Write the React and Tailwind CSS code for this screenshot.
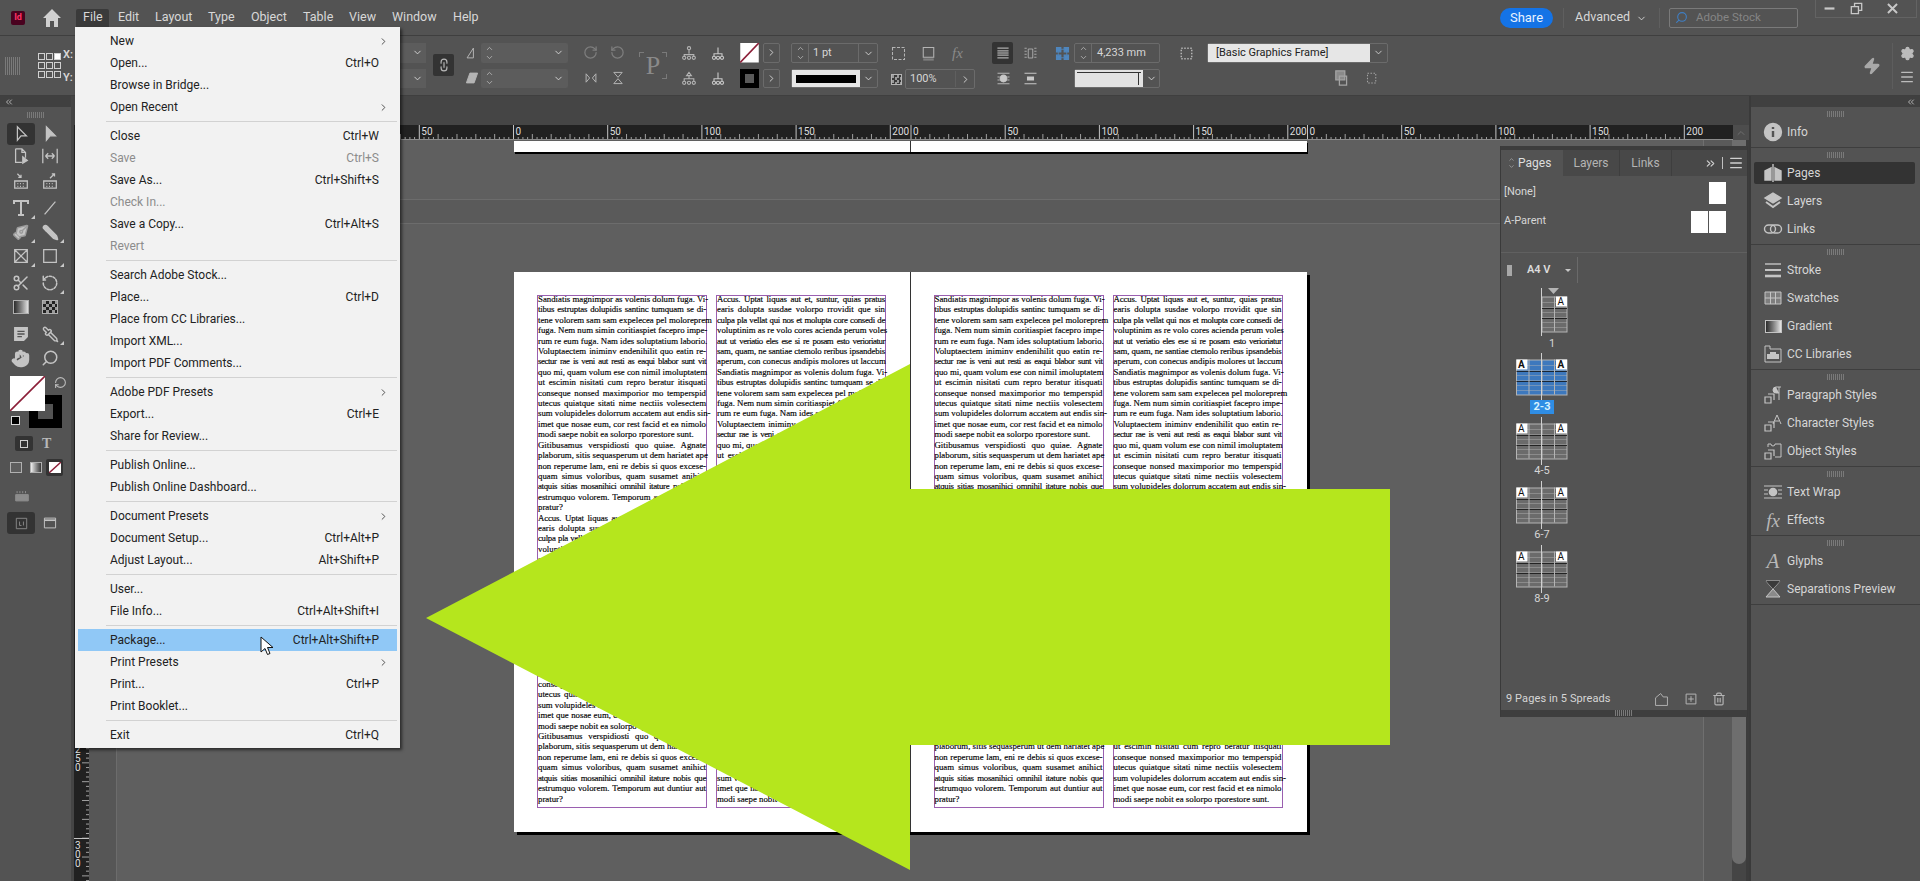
import { ChevronDown, ChevronRight, ChevronUp, ChevronsLeft, ChevronsRight, Hand, Link2, Menu, Pencil, PenTool, Pipette, RotateCcw, RotateCw, Scissors, Search, Settings, Trash2, Zap } from 'lucide-react'

const menuBar = [
  ['File', 'w-[35px]'],
  ['Edit', 'w-[37px]'],
  ['Layout', 'w-[53px]'],
  ['Type', 'w-[43px]'],
  ['Object', 'w-[52px]'],
  ['Table', 'w-[46px]'],
  ['View', 'w-[43px]'],
  ['Window', 'w-[61px]'],
  ['Help', 'w-[40px]'],
]

const fileMenu = [
  [{ label: 'New', sub: true }, { label: 'Open...', key: 'Ctrl+O' }, { label: 'Browse in Bridge...' }, { label: 'Open Recent', sub: true }],
  [{ label: 'Close', key: 'Ctrl+W' }, { label: 'Save', key: 'Ctrl+S', off: true }, { label: 'Save As...', key: 'Ctrl+Shift+S' }, { label: 'Check In...', off: true }, { label: 'Save a Copy...', key: 'Ctrl+Alt+S' }, { label: 'Revert', off: true }],
  [{ label: 'Search Adobe Stock...' }, { label: 'Place...', key: 'Ctrl+D' }, { label: 'Place from CC Libraries...' }, { label: 'Import XML...' }, { label: 'Import PDF Comments...' }],
  [{ label: 'Adobe PDF Presets', sub: true }, { label: 'Export...', key: 'Ctrl+E' }, { label: 'Share for Review...' }],
  [{ label: 'Publish Online...' }, { label: 'Publish Online Dashboard...' }],
  [{ label: 'Document Presets', sub: true }, { label: 'Document Setup...', key: 'Ctrl+Alt+P' }, { label: 'Adjust Layout...', key: 'Alt+Shift+P' }],
  [{ label: 'User...' }, { label: 'File Info...', key: 'Ctrl+Alt+Shift+I' }],
  [{ label: 'Package...', key: 'Ctrl+Alt+Shift+P', active: true }, { label: 'Print Presets', sub: true }, { label: 'Print...', key: 'Ctrl+P' }, { label: 'Print Booklet...' }],
  [{ label: 'Exit', key: 'Ctrl+Q' }],
]

const paraA = [
  'Sandiatis magnimpor as volenis dolum fuga. Vi-',
  'tibus estruptas dolupidis santinc tumquam se di-',
  'tene volorem sam sam expelecea pel moloreprem',
  'fuga. Nem num simin coritiaspiet facepro impe-',
  'rum re eum fuga. Nam ides soluptatium laborio.',
  'Voluptaectem iniminv endenihilit quo eatin re-',
  'sectur rae is veni aut resti as eaqui blabor sunt vit',
  'quo mi, quam volum ese con nimil imoluptatem',
  'ut escimin nisitati cum repro beratur itisquati',
  'conseque nonsed maximporior mo temperspid',
  'utecus quiatque sitati nime nectiis volesectem',
  'sum volupideles dolorrum accatem aut endis sin-',
  'imet que nosae eum, cor rest facid et ea nimolo',
  '~modi saepe nobit ea solorpo rporestore sunt.',
]
const paraB = [
  'Gitibusamus verspidiosti quo quiae. Agnate',
  'plaborum, sitis sequasperum ut dem hariatet ape',
  'non reperume lam, eni re debis si quos excese-',
  'quam simus voloribus, quam susamet anihict',
  'atquis sitias mosanihici omnihil itature nobis que',
  'estrumquo volorem. Temporum aut duntiur aut',
  '~pratur?',
]
const paraC = [
  'Accus. Uptat liquas aut et, suntur, quias pratus',
  'earis dolupta susdae volorpo rrovidit que sin',
  'culpa pla vellat qui nos et molupta core consedi de',
  'voluptinim as re volo cores acienda perum voles',
  'aut ut veriatio eles ese si re posam esto verioriatur',
  'sam, quam, ne santiae ctemolo reribus ipsandebis',
  'aperum, con conecus andipis molores ut laccum',
]
const columnOne = [...paraA, ...paraB, ...paraC, ...paraA, ...paraB]
const columnTwo = [...paraC, ...paraA, ...paraB, ...paraC, ...paraA]

const rulerOrigins = [
  { x: 513.5, from: 0, to: 200 },
  { x: 911, from: 0, to: 200 },
  { x: 1307.5, from: 0, to: 200 },
]

const Svg = ({ children, size = 18, box = 20, className = '' }) => (
  <svg width={size} height={size} viewBox={`0 0 ${box} ${box}`} fill="none" stroke="currentColor" strokeWidth="1.4" className={className}>
    {children}
  </svg>
)

const Corner = () => <span className="absolute bottom-0 right-0 h-0 w-0 border-b-[4px] border-l-[4px] border-b-[#c8c8c8] border-l-transparent" />

const Gripper = ({ className = '' }) => (
  <div className={`h-[6px] w-[18px] bg-[repeating-linear-gradient(90deg,#7a7a7a_0,#7a7a7a_1px,transparent_1px,transparent_2px)] ${className}`} />
)

const Tool = ({ children, corner, active }) => (
  <div className={`relative flex h-[22px] w-[28px] items-center justify-center rounded-[3px] text-[#c4c4c4] ${active ? 'bg-[#333333]' : ''}`}>
    {children}
    {corner && <Corner />}
  </div>
)

const tools = [
  {
    mt: 'mt-0',
    a: <Tool active><Svg><path d="M6 2v15l4-5h6z" /></Svg></Tool>,
    b: <Tool><Svg><path d="M6 2v15l4-5h6z" fill="currentColor" /></Svg></Tool>,
  },
  {
    mt: 'mt-0',
    a: <Tool><Svg><path d="M4 2h7l4 4v6M4 2v15h7M11 2v4h4" /><path d="M12 11v7l5-3z" fill="currentColor" /></Svg></Tool>,
    b: <Tool><Svg><path d="M2 2v16M18 2v16M5 10h10M5 10l3-3M5 10l3 3M15 10l-3-3M15 10l-3 3" /></Svg></Tool>,
  },
  {
    mt: 'mt-[3px]',
    a: <Tool><Svg><path d="M3 10h14v8H3zM6 2l4 4M10 3v3H7" /><path d="M6 13h1M9 13h1M12 13h1M6 16h1M9 16h1M12 16h1" /></Svg></Tool>,
    b: <Tool><Svg><path d="M3 10h14v8H3zM10 7l5-5M12 2h3v3" /><path d="M6 13h1M9 13h1M12 13h1M6 16h1M9 16h1M12 16h1" /></Svg></Tool>,
  },
  {
    mt: 'mt-[5px]',
    a: <Tool corner><Svg size={20}><path d="M3 6V3h14v3M10 3v14M7 17h6" strokeWidth="2" /></Svg></Tool>,
    b: <Tool><Svg><path d="M4 17L16 3" /></Svg></Tool>,
  },
  {
    mt: 'mt-[2px]',
    a: <Tool corner><PenTool size={17} fill="currentColor" stroke="#9a9a9a" className="-scale-x-100" /></Tool>,
    b: <Tool corner><Pencil size={17} fill="currentColor" className="-scale-x-100" /></Tool>,
  },
  {
    mt: 'mt-[2px]',
    a: <Tool corner><Svg><path d="M3 3h14v14H3zM3 3l14 14M17 3L3 17" /></Svg></Tool>,
    b: <Tool corner><Svg><path d="M3 3h14v14H3z" /></Svg></Tool>,
  },
  {
    mt: 'mt-[5px]',
    a: <Tool><Scissors size={18} /></Tool>,
    b: <Tool corner><RotateCcw size={18} strokeDasharray="3 2" /></Tool>,
  },
  {
    mt: 'mt-[2px]',
    a: <Tool><span className="h-[14px] w-[16px] border border-[#b0b0b0] bg-gradient-to-r from-[#2c2c2c] to-[#e0e0e0]" /></Tool>,
    b: <Tool><span className="h-[14px] w-[16px] border border-[#b0b0b0] bg-[repeating-conic-gradient(#222222_0%_25%,#9a9a9a_0%_50%)] bg-[length:6px_6px]" /></Tool>,
  },
  {
    mt: 'mt-[5px]',
    a: <Tool><Svg><path d="M3 3h14v10l-4 4H3z" fill="currentColor" /><path d="M6 7h8M6 10h8M6 13h5" stroke="#535353" /></Svg></Tool>,
    b: <Tool corner><Pipette size={17} className="-scale-x-100" /></Tool>,
  },
  {
    mt: 'mt-[2px]',
    a: <Tool><Hand size={19} fill="currentColor" /></Tool>,
    b: <Tool><Search size={18} className="-scale-x-100" /></Tool>,
  },
]

const Dock = ({ children, icon, active }) => (
  <div className={`ml-[3px] mr-[5px] flex h-[22px] items-center rounded-[2px] text-[12px] text-[#d6d6d6] ${active ? 'bg-[#333333]' : ''}`}>
    <div className="flex w-[33px] items-center justify-center pl-[5px] text-[#c4c4c4]">{icon}</div>
    {children}
  </div>
)

const styleBoxes = <path d="M2 12h6v6H2zM5 9h6v6" strokeWidth="1.2" />

const dockGroups = [
  { items: [{ label: 'Info', icon: <Svg size={20}><circle cx="10" cy="10" r="8.5" fill="currentColor" /><path d="M10 5v2M10 9v6" stroke="#535353" strokeWidth="2.4" /></Svg> }] },
  {
    items: [
      { label: 'Pages', active: true, icon: <Svg size={20}><path d="M2 8l6-3v12H2zM18 8l-6-3v12h6z" fill="currentColor" /><path d="M10 1v18" /></Svg> },
      { label: 'Layers', icon: <Svg size={20}><path d="M10 2l8 5-8 5-8-5z" fill="currentColor" /><path d="M3 11l7 5 7-5" strokeWidth="2" /></Svg> },
      { label: 'Links', icon: <Svg size={20}><rect x="1.5" y="6" width="11" height="8" rx="4" /><rect x="7.5" y="6" width="11" height="8" rx="4" /></Svg> },
    ],
  },
  {
    items: [
      { label: 'Stroke', icon: <Svg size={20}><path d="M2 4h16" /><path d="M2 10h16" strokeWidth="2" /><path d="M2 16h16" strokeWidth="2.6" /></Svg> },
      { label: 'Swatches', icon: <Svg size={20}><path d="M2 4h16v12H2zM2 10h16M7.5 4v12M12.5 4v12" fill="#7e7e7e" strokeWidth="1" /></Svg> },
      { label: 'Gradient', icon: <span className="h-[13px] w-[17px] border border-[#c4c4c4] bg-gradient-to-r from-[#2c2c2c] to-[#e6e6e6]" /> },
      { label: 'CC Libraries', icon: <Svg size={20}><path d="M2 2v16h16V5H7V2z" strokeWidth="1" /><path d="M4 15v-5h3V8h6v2h3v5z" fill="currentColor" stroke="none" /></Svg> },
    ],
  },
  {
    items: [
      { label: 'Paragraph Styles', icon: <Svg size={20}>{styleBoxes}<path d="M16 2v13M13 2h5M13 2a3 3 0 0 0 0 6h3" fill="currentColor" strokeWidth="1" /></Svg> },
      { label: 'Character Styles', icon: <Svg size={20}>{styleBoxes}<path d="M10 11l4-9 4 9M12 8h4" strokeWidth="1" /></Svg> },
      { label: 'Object Styles', icon: <Svg size={20}>{styleBoxes}<path d="M5 6V3h3a2 2 0 0 0 4 0h6v13h-6" strokeWidth="1" /></Svg> },
    ],
  },
  {
    items: [
      { label: 'Text Wrap', icon: <Svg size={20}><path d="M1 4h18M1 16h18M1 8h4M1 12h4M15 8h4M15 12h4" strokeWidth="1" /><circle cx="10" cy="10" r="3.6" fill="currentColor" /></Svg> },
      { label: 'Effects', icon: <span className="font-['Liberation_Serif',serif] text-[19px] italic leading-none text-[#b8b8b8]">fx</span> },
    ],
  },
  {
    items: [
      { label: 'Glyphs', icon: <span className="font-['Liberation_Serif',serif] text-[21px] italic leading-none text-[#b8b8b8]">A</span> },
      { label: 'Separations Preview', icon: <Svg size={20}><path d="M3 2h14L3 18h14z" fill="#8a8a8a" strokeWidth="1" /><path d="M3 2h14L10 10z" fill="#3a3a3a" stroke="none" /></Svg> },
    ],
  },
]

const Field = ({ className = '', children }) => (
  <div className={`flex h-[20px] items-center rounded-[2px] border border-[#6b6b6b] text-[11px] text-[#d6d6d6] ${className}`}>{children}</div>
)

const Stepper = ({ className = '' }) => (
  <div className={`flex w-[17px] shrink-0 flex-col items-center text-[#c0c0c0] ${className}`}>
    <ChevronUp size={9} />
    <ChevronDown size={9} />
  </div>
)

const Ctl = ({ children, className = '' }) => (
  <div className={`flex h-[20px] items-center justify-center text-[#b4b4b4] ${className}`}>{children}</div>
)

// long lines get squeezed a little, the way the layout engine in the picture does it
const squeeze = (line) => {
  if (line.length >= 52) return 'tracking-[-0.42px]'
  if (line.length >= 50) return 'tracking-[-0.3px]'
  if (line.length >= 48) return 'tracking-[-0.15px]'
  return ''
}

const Column = ({ lines }) => (
  <div className="h-[513px] border border-[#9a5fb0] font-['Liberation_Serif',serif] text-[8.8px] leading-[10.41px] text-black [-webkit-text-stroke:0.15px_#000000]">
    <div className="-mt-[2px]">
      {lines.map((line, i) => (
        <div key={i} className={`h-[10.41px] whitespace-nowrap text-justify ${squeeze(line)} ${line.startsWith('~') ? '' : '[text-align-last:justify]'}`}>
          {line.replace('~', '')}
        </div>
      ))}
    </div>
  </div>
)

const Page = ({ className = '' }) => (
  <div className={`grid h-full w-[397px] grid-cols-[170px_170px] gap-x-[9px] pl-[23px] pt-[23px] ${className}`}>
    <Column lines={columnOne} />
    <Column lines={columnTwo} />
  </div>
)

const Ruler = () => {
  const marks = []
  rulerOrigins.forEach(({ x, from, to }, o) => {
    for (let mm = o === 0 ? -100 : from; mm <= to; mm += 2.5) {
      marks.push({ px: x + mm * 1.884 - 89, mm, major: mm % 50 === 0, mid: mm % 10 === 0 })
    }
  })
  return (
    <div className="relative h-[15px] flex-1 overflow-hidden bg-[#212121]">
      <svg width="1642" height="15" className="absolute left-0 top-0">
        {marks.map((m, i) => (
          <line key={i} x1={m.px} x2={m.px} y1={m.major ? 0 : m.mid ? 9 : 12} y2="15" stroke={m.major ? '#c4c4c4' : '#a0a0a0'} strokeWidth="1" />
        ))}
      </svg>
      {marks.filter((m) => m.major).map((m, i) => (
        <span key={i} className="absolute top-0 text-[10px] leading-[13px] text-[#dddddd]" style={{ left: m.px + 2 }}>
          {Math.abs(m.mm)}
        </span>
      ))}
      <div className="absolute bottom-0 left-0 h-px w-full bg-[#8c8c8c]" />
    </div>
  )
}

const VerticalRuler = () => {
  const ticks = []
  for (let y = 604; y < 741; y += 4.71) ticks.push(y)
  return (
    <div className="relative w-[15px] shrink-0 bg-[#212121]">
      <svg width="15" height="741" className="absolute left-0 top-0">
        {ticks.map((y, i) => <line key={i} x1={i % 4 === 0 ? 8 : 12} x2="15" y1={y} y2={y} stroke="#a0a0a0" />)}
        <line x1="0" x2="15" y1="698.5" y2="698.5" stroke="#c4c4c4" />
      </svg>
      <div className="absolute left-[1px] top-[605px] flex flex-col text-[10px] leading-[9px] text-[#dddddd]">
        {['2', '5', '0'].map((d, i) => <span key={i}>{d}</span>)}
      </div>
      <div className="absolute left-[1px] top-[701px] flex flex-col text-[10px] leading-[9px] text-[#dddddd]">
        {['3', '0', '0'].map((d, i) => <span key={i}>{d}</span>)}
      </div>
    </div>
  )
}

const PageBox = ({ x, fill, border = '#b4b4b4' }) => (
  <g>
    <rect x={x} y="0.5" width="25" height="35" fill={fill} stroke={border} />
    {[6, 11, 16, 21, 26, 31].map((y) => <line key={y} x1={x} x2={x + 25} y1={y} y2={y} stroke={border} strokeOpacity="0.45" />)}
    <line x1={x} x2={x + 25} y1="12" y2="12" stroke="#111111" strokeOpacity="0.8" />
    <line x1={x} x2={x + 25} y1="22" y2="22" stroke="#111111" strokeOpacity="0.8" />
    <line x1={x + 12.5} x2={x + 12.5} y1="0" y2="35" stroke={border} />
  </g>
)

const Badge = ({ x, bold }) => (
  <g>
    <rect x={x} y="0" width="11" height="10" fill="#ffffff" />
    <text x={x + 1.5} y="8.5" fontSize="10" fontWeight={bold ? 700 : 400} fill="#111111">A</text>
  </g>
)

const Thumb = ({ label, active }) => (
  <div className="relative h-[64px] w-[52px]">
    <svg width="52" height="48" className="absolute left-0 top-0 overflow-visible">
      <g transform="translate(0.5 6.5)">
        <PageBox x={0} fill={active ? '#3d78bd' : '#6b6b6b'} />
        <PageBox x={25.5} fill={active ? '#3d78bd' : '#6b6b6b'} />
        <Badge x={0} bold={active} />
        <Badge x={39.5} bold={active} />
      </g>
      <line x1="25.5" x2="25.5" y1="0" y2="48" stroke="#d0d0d0" />
    </svg>
    <div className="absolute inset-x-0 top-[47px] flex justify-center">
      <span className={`px-[3px] text-[11px] leading-[14px] ${active ? 'w-[24px] bg-[#2f8de4] text-center font-bold text-[#d8f2ff]' : 'text-[#d6d6d6]'}`}>{label}</span>
    </div>
  </div>
)

const PagesPanel = () => (
  <div className="absolute bottom-[164px] left-[1426px] top-[50px] flex w-[248px] flex-col border-x border-[#3a3a3a] bg-[#535353] text-[#d6d6d6]">
    <div className="h-[4px] bg-[#3c3c3c]" />
    <div className="flex h-[26px] items-stretch bg-[#484848] text-[12px]">
      <div className="flex w-[62px] items-center gap-[3px] bg-[#535353] pl-[7px] text-[#dedede]">
        <span className="flex flex-col text-[#bcbcbc]"><ChevronUp size={7} /><ChevronDown size={7} /></span>
        Pages
      </div>
      <div className="flex w-[57px] items-center justify-center border-r border-[#3e3e3e] text-[#b4b4b4]">Layers</div>
      <div className="flex w-[52px] items-center justify-center border-r border-[#3e3e3e] text-[#b4b4b4]">Links</div>
      <div className="flex flex-1 items-center justify-end gap-[5px] pr-[3px] text-[#d0d0d0]">
        <ChevronsRight size={13} />
        <span className="h-[12px] w-px bg-[#c0c0c0]" />
        <Menu size={16} />
      </div>
    </div>
    <div className="flex h-[77px] flex-col border-b border-[#606060] pr-[21px] pt-[5px] text-[11px]">
      <div className="flex h-[23px] items-center justify-between pl-[3px]">
        [None]
        <span className="h-[22px] w-[17px] bg-white" />
      </div>
      <div className="mt-[6px] flex h-[23px] items-center justify-between pl-[3px]">
        A-Parent
        <span className="flex gap-px">
          <span className="h-[22px] w-[17px] bg-white" />
          <span className="h-[22px] w-[17px] bg-white" />
        </span>
      </div>
    </div>
    <div className="flex h-[34px] items-center pl-[6px] text-[11px] font-semibold text-[#dcdcdc]">
      <span className="h-[11px] w-[5px] bg-[#a8a8a8]" />
      <span className="ml-[15px]">A4 V</span>
      <span className="ml-[14px] h-0 w-0 border-x-[3px] border-t-[3px] border-x-transparent border-t-[#c8c8c8]" />
      <span className="ml-[6px] h-[26px] w-px bg-[#6a6a6a]" />
    </div>
    <div className="relative flex flex-1 flex-col pl-[15px] pt-[1px]">
      <div className="relative h-[65px] w-[52px]">
        <svg width="52" height="48" className="absolute left-0 top-0 overflow-visible">
          <g transform="translate(0.5 8.5)">
            <PageBox x={25.5} fill="#6b6b6b" />
            <Badge x={39.5} />
          </g>
          <line x1="25.5" x2="25.5" y1="0" y2="48" stroke="#d0d0d0" />
          <path d="M32 0h11l-5.500 6z" fill="#b4b4b4" />
        </svg>
        <span className="absolute left-[33px] top-[49px] text-[11px] leading-[14px]">1</span>
      </div>
      <Thumb label="2-3" active />
      <Thumb label="4-5" />
      <Thumb label="6-7" />
      <Thumb label="8-9" />
    </div>
    <div className="flex h-[22px] items-center pl-[5px] text-[11px]">
      <span className="w-[140px] tracking-[0.1px]">9 Pages in 5 Spreads</span>
      <Svg size={17} className="ml-[7px] text-[#b4b4b4]"><path d="M3 17V8l6-5 3 4h5v10z" strokeWidth="1.1" /></Svg>
      <Svg size={14} className="ml-[14px] text-[#b4b4b4]"><path d="M3 3h14v14H3zM10 6v8M6 10h8" strokeWidth="1.4" /></Svg>
      <Trash2 size={14} className="ml-[14px] text-[#b4b4b4]" />
    </div>
    <div className="flex h-[7px] justify-center bg-[#3e3e3e]"><Gripper className="h-[5px]" /></div>
  </div>
)

const FileMenu = () => (
  <div className="absolute left-[75px] top-[27px] z-30 w-[325px] bg-[#f2f2f2] pb-[2px] pl-[3px] pr-[3px] pt-[3px] font-[Roboto,sans-serif] text-[12px] shadow-[2px_2px_3px_rgba(0,0,0,0.55)]">
    {fileMenu.map((group, g) => (
      <div key={g}>
        {group.map((item) => (
          <div
            key={item.label}
            className={`flex h-[22px] items-center pl-[32px] pr-[18px] ${item.active ? 'bg-[#90c8f6]' : ''} ${item.off ? 'text-[#8c8c8c]' : 'text-[#222222]'}`}
          >
            <span className="flex-1">{item.label}</span>
            {item.key && <span>{item.key}</span>}
            {item.sub && <ChevronRight size={11} className="-mr-[10px] text-[#444444]" />}
          </div>
        ))}
        {g < fileMenu.length - 1 && (
          <div className="flex h-[7px] items-center pl-[28px]"><div className="h-px w-full bg-[#d2d2d2]" /></div>
        )}
      </div>
    ))}
  </div>
)

const App = () => {
  return (
    <div className="relative flex h-[881px] w-[1920px] flex-col overflow-hidden bg-[#535353] font-[Roboto,sans-serif] text-[#d8d8d8]">
      {/* title bar */}
      <header className="flex h-[36px] shrink-0 items-center border-b border-[#3f3f3f]">
        <div className="ml-[11px] flex h-[14px] w-[14px] items-center justify-center rounded-[2px] bg-[#49021f] text-[9px] font-bold text-[#ff3366]">Id</div>
        <Svg size={20} className="ml-[17px] text-[#d0d0d0]"><path d="M10 1L1 10h3v9h4v-6h4v6h4v-9h3z" fill="currentColor" stroke="none" /></Svg>
        <nav className="ml-[14px] flex text-[12.5px]">
          {menuBar.map(([label, width]) => (
            <span key={label} className={`${width} flex h-[18px] items-center pl-[7px]`}>
              {label === 'File' ? <span className="-ml-[7px] flex h-[18px] w-[33px] items-center rounded-t-[2px] bg-[#3a3a3a] pl-[7px]">{label}</span> : label}
            </span>
          ))}
        </nav>
        <div className="flex-1" />
        <div className="flex h-[20px] w-[53px] items-center justify-center rounded-full bg-[#1473e6] text-[13px] text-[#e8f2ff]">Share</div>
        <span className="ml-[10px] h-[20px] w-px bg-[#5f5f5f]" />
        <span className="ml-[11px] w-[53px] whitespace-nowrap text-[12.5px]">Advanced</span>
        <ChevronDown size={11} className="ml-[8px] mt-[2px]" />
        <span className="ml-[12px] h-[20px] w-px bg-[#5f5f5f]" />
        <div className="ml-[9px] flex h-[20px] w-[129px] items-center rounded-[2px] border border-[#7a7a7a] pl-[5px] text-[11.5px] text-[#858585]">
          <Search size={13} className="-scale-x-100 text-[#3f7fc4]" />
          <span className="ml-[8px]">Adobe Stock</span>
        </div>
        <div className="ml-[17px] mr-[3px] flex h-[18px] w-[102px] -translate-y-[9px] items-center border-b border-l border-r border-[#636363] text-[#c8c8c8]">
          <Svg size={11} className="ml-[8px]"><path d="M1 10h18" strokeWidth="4" /></Svg>
          <Svg size={13} className="ml-[15px]"><path d="M2 7h11v11H2zM7 7V2h11v11h-5" strokeWidth="2" /></Svg>
          <Svg size={13} className="ml-[23px]"><path d="M3 3l14 14M17 3L3 17" strokeWidth="3" /></Svg>
        </div>
      </header>

      {/* control panel */}
      <section className="flex h-[60px] shrink-0 border-b border-[#3f3f3f] py-[7px] text-[11px]">
        <div className="flex h-full w-[60px] items-center">
          <Gripper className="ml-[5px] h-[18px] w-[5px] bg-[repeating-linear-gradient(0deg,#7a7a7a_0,#7a7a7a_1px,transparent_1px,transparent_2px)]" />
          <div className="ml-[18px] grid grid-cols-3 gap-[2px]">
            {[0, 1, 2, 3, 4, 5, 6, 7, 8].map((n) => (
              <span key={n} className={`h-[7px] w-[7px] border border-[#d0d0d0] ${n === 2 ? 'bg-white' : ''}`} />
            ))}
          </div>
        </div>
        <div className="flex w-[340px] flex-col justify-between pb-[2px] pl-[3px] pt-[4px] font-semibold"><span>X:</span><span>Y:</span></div>
        <div className="flex w-[33px] flex-col gap-[6px]">
          <div className="flex h-[20px] w-[26px] items-center justify-end bg-[#5c5c5c] pr-[3px]"><ChevronDown size={11} /></div>
          <div className="flex h-[20px] w-[26px] items-center justify-end bg-[#5c5c5c] pr-[3px]"><ChevronDown size={11} /></div>
        </div>
        <div className="mt-[11px] flex h-[22px] w-[21px] items-center justify-center rounded-[2px] bg-[#333333] text-[#b8b8b8]"><Link2 size={14} className="rotate-90" /></div>
        <div className="flex w-[27px] flex-col gap-[6px] pl-[8px]">
          <Ctl><Svg size={14}><path d="M3 17L12 3v14z" /></Svg></Ctl>
          <Ctl><Svg size={14}><path d="M2 17L7 3h11l-5 14z" fill="currentColor" /></Svg></Ctl>
        </div>
        <div className="flex w-[96px] flex-col gap-[6px]">
          <div className="flex h-[20px] w-[87px] items-center rounded-[2px] bg-[#5c5c5c]"><Stepper /><span className="flex-1" /><ChevronDown size={11} className="mr-[4px]" /></div>
          <div className="flex h-[20px] w-[87px] items-center rounded-[2px] bg-[#5c5c5c]"><Stepper /><span className="flex-1" /><ChevronDown size={11} className="mr-[4px]" /></div>
        </div>
        <div className="flex w-[27px] flex-col gap-[6px]">
          <Ctl><RotateCw size={15} className="text-[#7e7e7e]" /></Ctl>
          <Ctl><Svg size={14}><path d="M3 4v12l5-6zM17 4v12l-5-6z" /></Svg></Ctl>
        </div>
        <div className="flex w-[27px] flex-col gap-[6px]">
          <Ctl><RotateCcw size={15} className="text-[#7e7e7e]" /></Ctl>
          <Ctl><Svg size={14}><path d="M4 2h12l-6 7zM4 18h12l-6-7z" /></Svg></Ctl>
        </div>
        <div className="relative flex h-full w-[44px] items-center justify-center font-['Liberation_Serif',serif] text-[26px] text-[#8a8a8a]">
          <span className="absolute left-[8px] top-[9px] h-[5px] w-[5px] border-l border-t border-[#7a7a7a]" />
          <span className="absolute right-[8px] top-[9px] h-[5px] w-[5px] border-r border-t border-[#7a7a7a]" />
          <span className="absolute bottom-[9px] right-[8px] h-[5px] w-[5px] border-b border-r border-[#7a7a7a]" />
          P
        </div>
        <div className="flex w-[28px] flex-col gap-[6px]">
          <Ctl><Svg size={16}><circle cx="10" cy="4" r="2" /><path d="M10 6v5M4 15v-3h12v3" /><circle cx="4" cy="16" r="2" /><circle cx="10" cy="16" r="2" /><circle cx="16" cy="16" r="2" /></Svg></Ctl>
          <Ctl><Svg size={16}><path d="M10 3l-3 4h6zM10 7v4M4 14v-3h12v3" /><circle cx="4" cy="16" r="2" /><circle cx="10" cy="16" r="2" /><circle cx="16" cy="16" r="2" /></Svg></Ctl>
        </div>
        <div className="flex w-[37px] flex-col gap-[6px] pr-[8px]">
          <Ctl className="text-[#c8c8c8]"><Svg size={16}><path d="M10 3v8M5 14v-3h10v3" /><circle cx="5" cy="16" r="2" /><circle cx="10" cy="16" r="2" /><circle cx="15" cy="16" r="2" /></Svg></Ctl>
          <Ctl className="text-[#c8c8c8]"><Svg size={16}><path d="M10 3v8M5 14v-3h10v3" /><circle cx="5" cy="16" r="2" /><circle cx="10" cy="16" r="2" /><circle cx="15" cy="16" r="2" /></Svg></Ctl>
        </div>
        <div className="flex w-[23px] flex-col gap-[6px]">
          <svg width="19" height="20" viewBox="0 0 19 20"><rect width="19" height="20" fill="#ffffff" /><line x1="0" y1="20" x2="19" y2="0" stroke="#8c1f38" strokeWidth="1.6" /></svg>
          <div className="flex h-[20px] w-[19px] items-center justify-center bg-black"><span className="h-[9px] w-[9px] bg-[#5a5a5a]" /></div>
        </div>
        <div className="flex w-[28px] flex-col gap-[6px]">
          <Field className="w-[17px] justify-center"><ChevronRight size={11} /></Field>
          <Field className="w-[17px] justify-center"><ChevronRight size={11} /></Field>
        </div>
        <div className="flex w-[95px] flex-col gap-[6px]">
          <Field className="w-[87px]">
            <Stepper className="border-r border-[#6b6b6b]" />
            <span className="ml-[4px] flex-1">1 pt</span>
            <span className="flex h-full w-[19px] items-center justify-center border-l border-[#6b6b6b]"><ChevronDown size={11} /></span>
          </Field>
          <div className="flex h-[20px] w-[87px] items-center rounded-[2px] border border-[#6b6b6b]">
            <div className="flex h-full w-[68px] items-center justify-center bg-[#e6e6e6]"><span className="h-[8px] w-[60px] bg-black" /></div>
            <span className="flex flex-1 items-center justify-center"><ChevronDown size={11} /></span>
          </div>
        </div>
        <div className="flex w-[106px] flex-col gap-[6px]">
          <div className="flex h-[20px] items-center text-[#b4b4b4]">
            <Svg size={15} className="ml-[5px]"><path d="M2 2h16v16H2z" strokeDasharray="4 2" /></Svg>
            <Svg size={15} className="ml-[15px]"><path d="M3 2h14v13H3z" /><path d="M3 18h14" strokeWidth="3" stroke="#7e7e7e" /></Svg>
            <span className="ml-[16px] font-['Liberation_Serif',serif] text-[15px] italic text-[#8a8a8a]">fx</span>
          </div>
          <div className="flex h-[20px] items-center">
            <span className="ml-[5px] h-[11px] w-[11px] border border-[#b4b4b4] bg-[repeating-conic-gradient(#3a3a3a_0%_25%,#9a9a9a_0%_50%)] bg-[length:5px_5px]" />
            <Field className="ml-[3px] w-[70px]">
              <span className="ml-[4px] flex-1 border-r border-[#5f5f5f]">100%</span>
              <span className="flex w-[18px] justify-center"><ChevronRight size={11} /></span>
            </Field>
          </div>
        </div>
        <div className="flex w-[58px] flex-col gap-[6px]">
          <div className="flex h-[20px] items-center">
            <span className="flex h-[22px] w-[21px] items-center justify-center rounded-[2px] bg-[#333333] text-[#d0d0d0]"><Svg size={14}><path d="M2 3h16M2 7h16M2 10h16M2 13h16M2 17h16" /></Svg></span>
            <Svg size={15} className="ml-[10px] text-[#b8b8b8]"><path d="M7 4h6v12H7zM2 3h3M2 7h3M2 11h3M2 15h3M15 3h3M15 7h3M15 11h3M15 15h3" strokeWidth="1.1" /></Svg>
          </div>
          <div className="flex h-[20px] items-center">
            <Svg size={15} className="ml-[4px] text-[#c8c8c8]"><circle cx="10" cy="10" r="4.500" fill="currentColor" /><path d="M2 3h16M2 17h16M2 8h3M2 12h3M15 8h3M15 12h3" strokeWidth="1.1" /></Svg>
            <Svg size={15} className="ml-[12px] text-[#c8c8c8]"><path d="M2 3h16M2 17h16" /><path d="M6 8h8v4H6z" fill="currentColor" /></Svg>
          </div>
        </div>
        <div className="flex w-[24px] flex-col gap-[6px]">
          <Ctl><Svg size={17} className="text-[#4f86bd]"><path d="M3 3h5v5H3zM12 3h5v5h-5zM3 12h5v5H3zM12 12h5v5h-5z" fill="currentColor" /><path d="M5 8v4M15 8v4M8 5h4M8 15h4" strokeWidth="1" /></Svg></Ctl>
        </div>
        <div className="flex w-[99px] flex-col gap-[6px]">
          <Field className="w-[86px]"><Stepper className="border-r border-[#6b6b6b]" /><span className="ml-[5px]">4,233 mm</span></Field>
          <div className="flex h-[20px] w-[86px] items-center rounded-[2px] border border-[#6b6b6b]">
            <div className="relative h-full w-[68px] bg-[#e2e2e2]">
              <span className="absolute inset-x-[2px] top-[2px] h-px bg-[#333333]" />
              <span className="absolute bottom-[2px] right-[4px] top-[2px] w-px bg-[#333333]" />
            </div>
            <span className="flex flex-1 items-center justify-center"><ChevronDown size={11} /></span>
          </div>
        </div>
        <div className="flex w-[34px] flex-col gap-[6px]">
          <Ctl className="w-[26px] text-[#a8a8a8]"><Svg size={15}><path d="M3 3h14v14H3z" strokeDasharray="2 2" strokeWidth="2" /></Svg></Ctl>
        </div>
        <div className="flex w-[181px] flex-col gap-[6px]">
          <div className="flex h-[20px] items-center rounded-[2px] border border-[#6b6b6b]">
            <span className="flex h-full w-[162px] items-center bg-[#e6e6e6] pl-[8px] text-[11px] text-[#222222]">[Basic Graphics Frame]</span>
            <span className="flex flex-1 items-center justify-center text-[#d0d0d0]"><ChevronDown size={11} /></span>
          </div>
          <div className="flex h-[20px] items-center pl-[127px] text-[#a4a4a4]">
            <Svg size={18}><path d="M2 2h10v10H2z" fill="#8a8a8a" /><path d="M6 8h8v10H6z" /></Svg>
            <Svg size={15} className="ml-[14px]"><path d="M2 3h11v13H2z" strokeDasharray="2 2" /></Svg>
          </div>
        </div>
        <div className="flex h-full flex-1 items-center justify-end">
          <Zap size={18} fill="currentColor" className="text-[#a8a8a8]" />
          <span className="ml-[11px] h-[46px] w-px bg-[#5d5d5d]" />
          <div className="ml-[6px] mr-[5px] flex flex-col items-center gap-[8px] text-[#bcbcbc]">
            <Settings size={15} fill="currentColor" />
            <Menu size={16} />
          </div>
        </div>
      </section>

      <div className="flex min-h-0 flex-1">
        {/* tools */}
        <aside className="flex w-[74px] shrink-0 flex-col border-r-[3px] border-[#454545]">
          <div className="flex h-[11px] items-center bg-[#404040] pl-[4px] text-[#c8c8c8]"><ChevronsLeft size={10} /></div>
          <div className="flex h-[16px] items-center justify-center"><Gripper /></div>
          <div className="flex flex-col px-[7px]">
            {tools.map((row, i) => (
              <div key={i} className={`flex gap-[2px] ${row.mt}`}>
                {row.a}
                {row.b}
              </div>
            ))}
          </div>
          <div className="relative mt-[7px] h-[54px] w-full">
            <span className="absolute left-[10px] top-0 z-10 h-[35px] w-[35px]">
              <svg width="35" height="35"><rect width="35" height="35" fill="#ffffff" /><line x1="0" y1="35" x2="35" y2="0" stroke="#8c1f38" strokeWidth="1.6" /></svg>
            </span>
            <span className="absolute left-[29px] top-[19px] h-[33px] w-[33px] border-[9px] border-black" />
            <RotateCcw size={13} className="absolute left-[54px] top-0 -scale-y-100 text-[#bcbcbc]" />
            <span className="absolute left-[11px] top-[40px] h-[9px] w-[9px] border border-[#d8d8d8] bg-black" />
          </div>
          <div className="mt-[6px] flex items-center pl-[15px]">
            <span className="flex h-[15px] w-[18px] items-center justify-center rounded-[2px] bg-[#333333]"><span className="h-[8px] w-[8px] border border-[#d0d0d0]" /></span>
            <span className="ml-[9px] font-['Liberation_Serif',serif] text-[14px] font-bold leading-none text-[#b8b8b8]">T</span>
          </div>
          <div className="mt-[8px] flex items-center pl-[10px]">
            <span className="h-[11px] w-[12px] border border-[#b0b0b0] bg-[#5e5e5e]" />
            <span className="ml-[8px] h-[11px] w-[12px] border border-[#b0b0b0] bg-gradient-to-r from-[#f0f0f0] to-[#3a3a3a]" />
            <span className="ml-[4px] flex h-[17px] w-[17px] items-center justify-center rounded-[2px] bg-[#333333]">
              <svg width="12" height="11"><rect width="12" height="11" fill="#ffffff" /><line x1="0" y1="11" x2="12" y2="0" stroke="#8c1f38" strokeWidth="1.4" /></svg>
            </span>
          </div>
          <div className="mt-[13px] pl-[15px] text-[#8c8c8c]"><Svg size={14}><path d="M1 8h18v9H1z" fill="currentColor" /><path d="M3 3v3M7 3v3M11 3v3M15 3v3" /></Svg></div>
          <div className="mt-[9px] flex items-center pl-[7px]">
            <span className="flex h-[22px] w-[28px] items-center justify-center rounded-[3px] bg-[#333333] text-[#8c8c8c]"><Svg size={13}><path d="M2 2h16v16H2zM7 7v6h3M13 7v6" /></Svg></span>
            <span className="ml-[8px] text-[#c4c4c4]"><Svg size={14}><path d="M2 3h16v14H2z" /><path d="M2 6h16" strokeWidth="2.4" /></Svg></span>
          </div>
        </aside>

        {/* document window */}
        <main className="relative flex min-w-0 w-[1675px] shrink-0 flex-col">
          <div className="h-[29px] shrink-0 bg-[#454545]" />
          <div className="flex h-[15px] shrink-0">
            <div className="w-[15px] bg-[#212121]" />
            <Ruler />
            <div className="flex w-[16px] items-center justify-center bg-[#4d4d4d] text-[#6e6e6e]"><ChevronUp size={12} /></div>
          </div>
          <div className="flex min-h-0 flex-1">
            <VerticalRuler />
            <div className="relative flex-1 overflow-hidden bg-[#5f5f5f]">
              <div className="absolute bottom-0 left-0 top-0 w-[28px] border-r border-[#6c6c6c] bg-[#565656]" />
              <div className="absolute left-[28px] right-[46px] top-[59px] h-[25px] border-y border-[#6c6c6c] bg-[#5a5a5a]" />
              <div className="absolute left-[425px] top-[1px] flex h-[11px] w-[793px] bg-white shadow-[1px_2px_0_#000000]">
                <div className="h-full w-[397px] border-r border-[#333333]" />
              </div>
              <div className="absolute left-[425px] top-[132px] flex h-[560px] w-[793px] bg-white shadow-[3px_3px_0_#000000]">
                <Page className="border-r border-[#333333]" />
                <Page />
              </div>
              {/* pasteboard edge and vertical scrollbar */}
              <div className="absolute bottom-0 right-[17px] top-0 w-[29px] border-l border-[#6f6f6f] bg-[#5a5a5a]" />
              <div className="absolute bottom-0 right-0 top-0 w-[17px] border-r-[3px] border-[#3c3c3c] bg-[#454545]">
                <div className="absolute inset-x-0 bottom-[17px] top-0 rounded-b-full bg-[#6e6e6e]" />
              </div>
            </div>
          </div>
          <PagesPanel />
        </main>

        {/* panel dock */}
        <aside className="flex flex-1 flex-col border-l-[2px] border-[#3a3a3a]">
          <div className="flex h-[11px] items-center justify-end bg-[#404040] pr-[4px] text-[#c8c8c8]"><ChevronsLeft size={10} /></div>
          {dockGroups.map((group, g) => (
            <div key={g} className="border-b border-[#3e3e3e] pb-[4px]">
              <div className="flex h-[12px] items-center justify-center pt-[2px]"><Gripper className="h-[5px]" /></div>
              <div className="flex flex-col gap-[6px] pt-[2px]">
                {group.items.map((item) => (
                  <Dock key={item.label} icon={item.icon} active={item.active}>{item.label}</Dock>
                ))}
              </div>
            </div>
          ))}
        </aside>
      </div>

      <FileMenu />

      {/* green arrow laid over the document */}
      <svg width="1920" height="881" className="pointer-events-none absolute left-0 top-0 z-20">
        <path d="M426 618L910 364V489H1390V745H910V870z" fill="#b5e61d" />
      </svg>

      {/* mouse pointer */}
      <svg width="14" height="20" viewBox="0 0 14 20" className="absolute left-[260px] top-[636px] z-40">
        <path d="M1 1v15l4-3.500 2.500 6 2.500-1-2.500-6H13z" fill="#ffffff" stroke="#111111" strokeWidth="1" />
      </svg>
    </div>
  )
}

export default App
